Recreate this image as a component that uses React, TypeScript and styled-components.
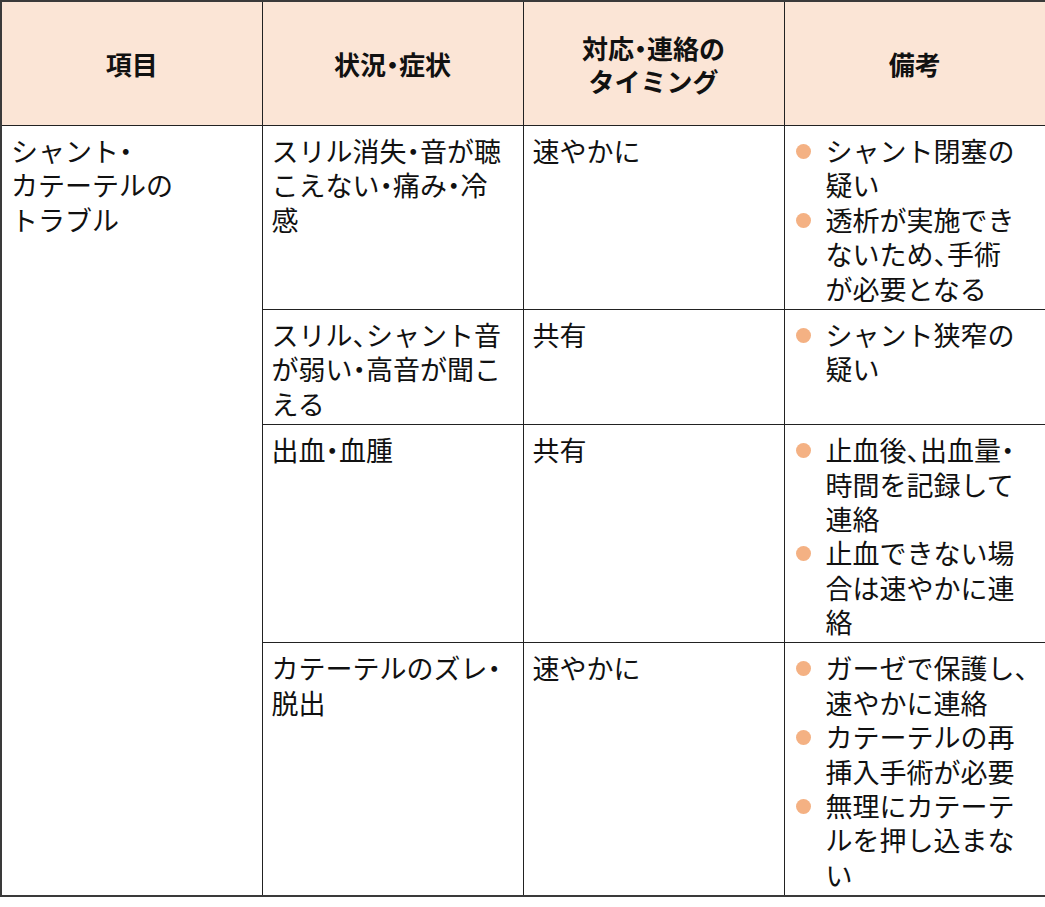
import styled, { createGlobalStyle } from "styled-components"

const GlobalStyle = createGlobalStyle`
  html, body {
    margin: 0;
    padding: 0;
    background: #fff;
  }
  body {
    font-family: "Noto Sans CJK JP", "Noto Sans", sans-serif;
    color: #111;
  }
`

type Row = {
    situation: string[];
    timing: string;
    notes: string[][];
}

const rows: Row[] = [
    {
        situation: ["スリル消失・音が聴", "こえない・痛み・冷", "感"],
        timing: "速やかに",
        notes: [
            ["シャント閉塞の", "疑い"],
            ["透析が実施でき", "ないため、手術", "が必要となる"],
        ],
    },
    {
        situation: ["スリル、シャント音", "が弱い・高音が聞こ", "える"],
        timing: "共有",
        notes: [["シャント狭窄の", "疑い"]],
    },
    {
        situation: ["出血・血腫"],
        timing: "共有",
        notes: [
            ["止血後、出血量・", "時間を記録して", "連絡"],
            ["止血できない場", "合は速やかに連", "絡"],
        ],
    },
    {
        situation: ["カテーテルのズレ・", "脱出"],
        timing: "速やかに",
        notes: [
            ["ガーゼで保護し、", "速やかに連絡"],
            ["カテーテルの再", "挿入手術が必要"],
            ["無理にカテーテ", "ルを押し込まな", "い"],
        ],
    },
]

// 「・」「、」は半角幅で詰める
const Text = ({ children }: { children: string }) => (
    <>
        {children.split(/([・、])/).map((part, i) =>
            part === "・" || part === "、" ? <Punct key={i}>{part}</Punct> : part
        )}
    </>
)

const Lines = ({ lines }: { lines: string[] }) => (
    <>
        {lines.map((l, i) => (
            <Line key={i}>
                <Text>{l}</Text>
            </Line>
        ))}
    </>
)

export default function App() {
    return (
        <>
            <GlobalStyle />
            <Table>
                <colgroup>
                    <col style={{ width: 261 }} />
                    <col style={{ width: 261 }} />
                    <col style={{ width: 261 }} />
                    <col style={{ width: 262 }} />
                </colgroup>
                <thead>
                    <tr>
                        <HeadCell>項目</HeadCell>
                        <HeadCell>
                            <Text>状況・症状</Text>
                        </HeadCell>
                        <HeadCell>
                            <HeadLine><Text>対応・連絡の</Text></HeadLine>
                            <HeadLine>タイミング</HeadLine>
                        </HeadCell>
                        <HeadCell>備考</HeadCell>
                    </tr>
                </thead>
                <tbody>
                    {rows.map((r, i) => (
                        <tr key={i}>
                            {i === 0 && (
                                <Cell rowSpan={rows.length}>
                                    <Lines lines={["シャント・", "カテーテルの", "トラブル"]} />
                                </Cell>
                            )}
                            <Cell>
                                <Lines lines={r.situation} />
                            </Cell>
                            <Cell>
                                <Line>{r.timing}</Line>
                            </Cell>
                            <NoteCell>
                                <NoteList>
                                    {r.notes.map((n, j) => (
                                        <NoteItem key={j}>
                                            <Lines lines={n} />
                                        </NoteItem>
                                    ))}
                                </NoteList>
                            </NoteCell>
                        </tr>
                    ))}
                </tbody>
            </Table>
        </>
    )
}

const Table = styled.table`
    width: 1045px;
    table-layout: fixed;
    border-collapse: collapse;
    border: 2px solid #3a3a3a;
`

const HeadCell = styled.th`
    height: 123px;
    padding: 0;
    background: #fbe5d6;
    border: 1px solid #222;
    font-size: 26px;
    font-weight: 700;
    line-height: 34px;
    text-align: center;
    vertical-align: middle;
`

const HeadLine = styled.div`
    height: 33px;
    line-height: 33px;
    white-space: nowrap;
`

const Cell = styled.td`
    padding: 8px 0 3px 9px;
    border: 1px solid #222;
    font-size: 27px;
    line-height: 34.4px;
    vertical-align: top;
`

const NoteCell = styled(Cell)`
    padding-left: 10px;
`

const Line = styled.div`
    height: 34.4px;
    line-height: 34.4px;
    white-space: nowrap;
`

const Punct = styled.span`
    font-feature-settings: "halt" 1;
`

const NoteList = styled.ul`
    margin: 0;
    padding: 0;
    list-style: none;
`

const NoteItem = styled.li`
    position: relative;
    padding-left: 31px;

    &::before {
        content: "";
        position: absolute;
        left: 1px;
        top: 10px;
        width: 15px;
        height: 15px;
        border-radius: 50%;
        background: #f4b183;
    }
`
